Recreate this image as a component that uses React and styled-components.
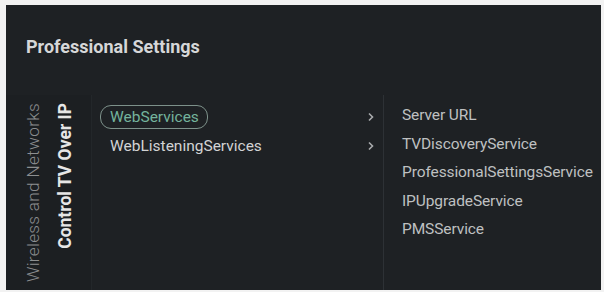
import React from 'react'
import styled, { createGlobalStyle } from 'styled-components'

const Global = createGlobalStyle`
  html, body {
    margin: 0;
    padding: 0;
    background: #f2f2f2;
  }
  body {
    font-family: Roboto, "Liberation Sans", sans-serif;
  }
`

const Panel = styled.div`
  margin: 5px 3px 0 6px;
  width: 595px;
  height: 285px;
  background: #1e2124;
  display: flex;
  flex-direction: column;
  overflow: hidden;
`

const Header = styled.div`
  height: 90px;
  display: flex;
  align-items: center;
  padding: 0 0 7px 20px;
  box-sizing: border-box;
`

const Title = styled.h1`
  margin: 0;
  font-size: 18px;
  font-weight: 700;
  color: #d6d7d8;
`

const Body = styled.div`
  flex: 1;
  display: flex;
`

const Crumbs = styled.div`
  width: 86px;
  display: flex;
  align-items: flex-start;
  gap: 12px;
  padding: 8px 0 0 17px;
  box-sizing: border-box;
  background: #1c1f22;
  border-right: 1px solid #23272a;
`

const Crumb = styled.div`
  writing-mode: vertical-rl;
  transform: rotate(180deg);
  font-size: ${p => (p.$current ? '17.5px' : '17.2px')};
  line-height: 20px;
  white-space: nowrap;
  font-weight: ${p => (p.$current ? 700 : 300)};
  color: ${p => (p.$current ? '#e6e6e6' : '#8c8e90')};
  letter-spacing: ${p => (p.$current ? '0' : '0.3px')};
`

const Menu = styled.div`
  width: 292px;
  padding: 7px 0 0 8px;
  box-sizing: border-box;
  border-right: 1px solid #2d3135;
  display: flex;
  flex-direction: column;
`

const Row = styled.div`
  height: 29.5px;
  display: flex;
  align-items: center;
  justify-content: space-between;
  padding-right: 8px;
`

const Label = styled.span`
  height: 22px;
  display: inline-flex;
  align-items: center;
  padding: 0 8px 0 9px;
  border-radius: 11px;
  font-size: 15.5px;
  border: 1px solid ${p => (p.$selected ? '#7d918a' : 'transparent')};
  color: ${p => (p.$selected ? '#74b39c' : '#d2d3d4')};
`

const Chevron = () => (
  <svg width="8" height="10" viewBox="0 0 8 10">
    <polyline points="2,1.5 5.5,5 2,8.5" fill="none" stroke="#a9abad" strokeWidth="1.6" />
  </svg>
)

const Options = styled.div`
  flex: 1;
  padding: 6px 0 0 18px;
  display: flex;
  flex-direction: column;
`

const Option = styled.div`
  height: 28.5px;
  display: flex;
  align-items: center;
  font-size: 15.5px;
  color: #bfc0c1;
  white-space: nowrap;
  letter-spacing: -0.1px;
`

const menu = [
  { label: 'WebServices', selected: true },
  { label: 'WebListeningServices' },
]

const options = [
  'Server URL',
  'TVDiscoveryService',
  'ProfessionalSettingsService',
  'IPUpgradeService',
  'PMSService',
]

export default function App() {
  return (
    <>
      <Global />
      <Panel>
        <Header>
          <Title>Professional Settings</Title>
        </Header>
        <Body>
          <Crumbs>
            <Crumb>Wireless and Networks</Crumb>
            <Crumb $current>Control TV Over IP</Crumb>
          </Crumbs>
          <Menu>
            {menu.map(item => (
              <Row key={item.label}>
                <Label $selected={item.selected}>{item.label}</Label>
                <Chevron />
              </Row>
            ))}
          </Menu>
          <Options>
            {options.map(o => (
              <Option key={o}>{o}</Option>
            ))}
          </Options>
        </Body>
      </Panel>
    </>
  )
}
